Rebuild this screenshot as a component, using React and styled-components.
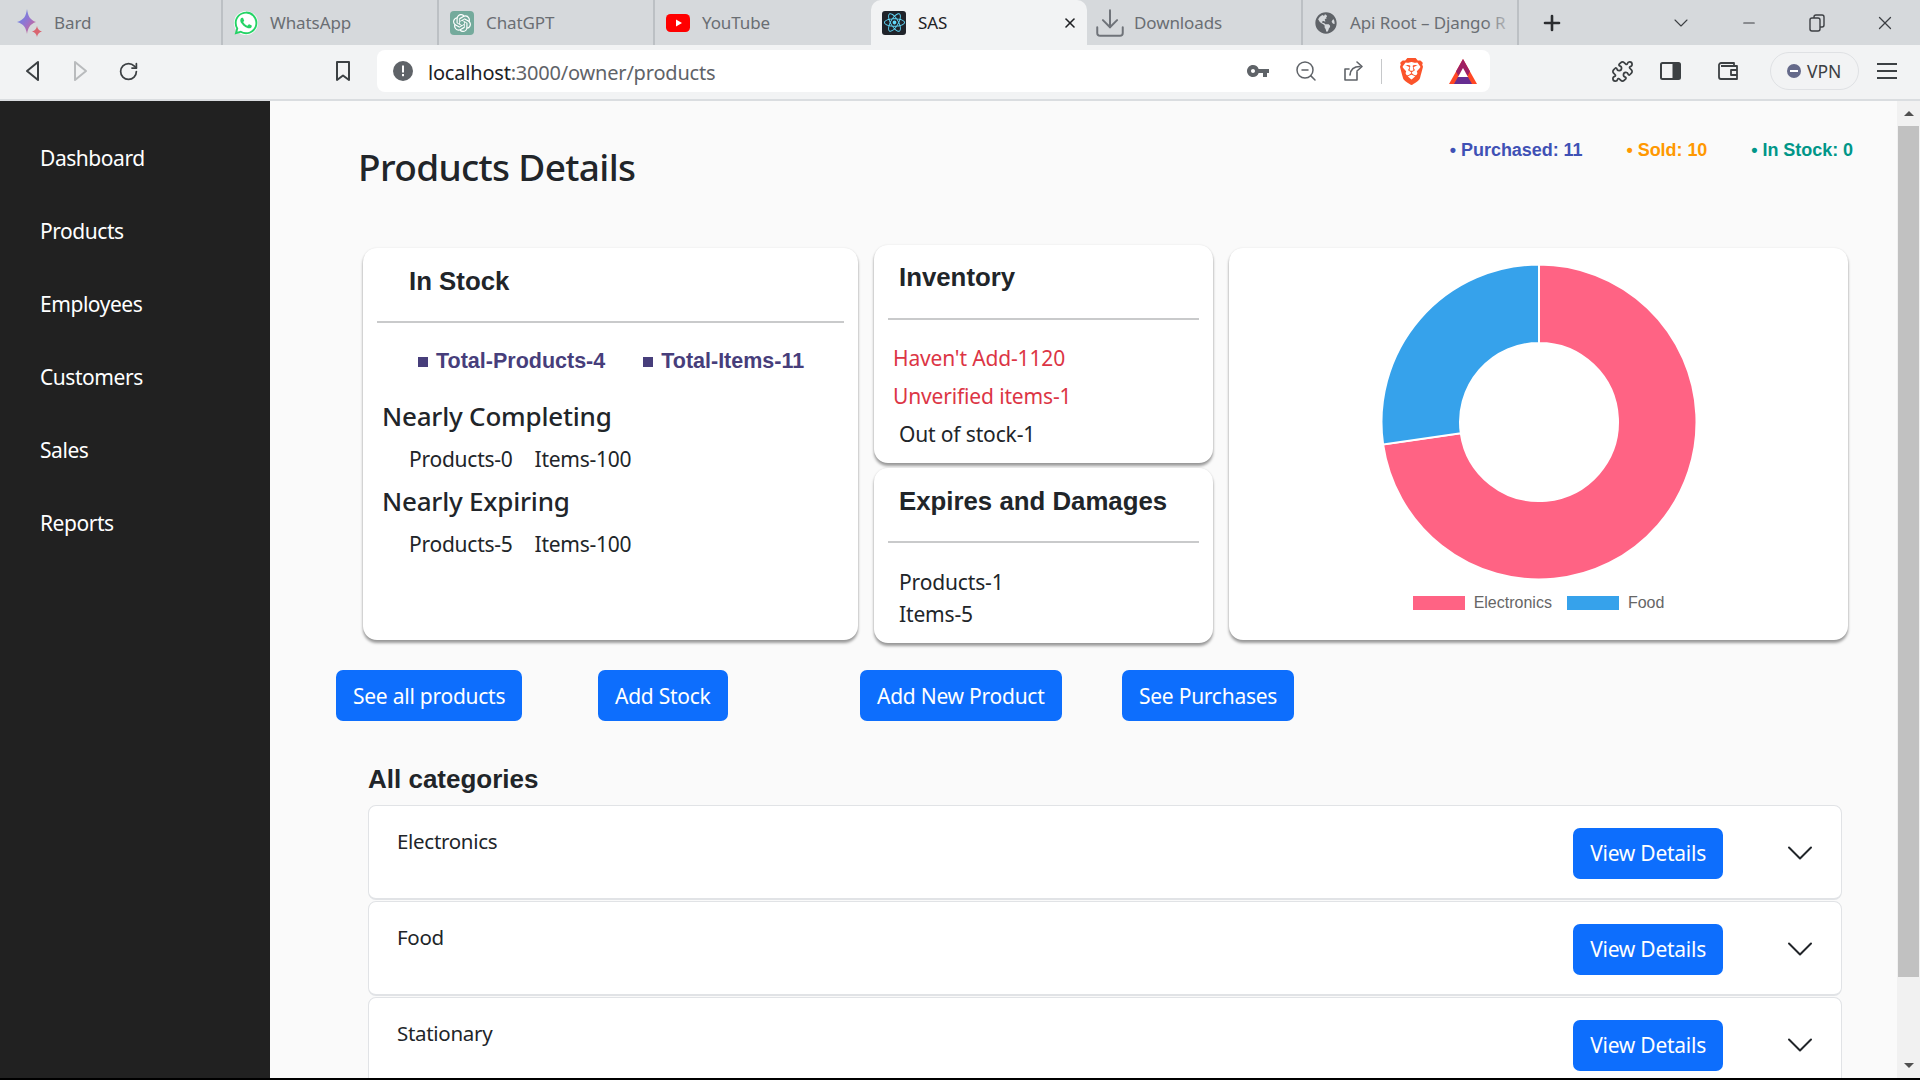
import React from "react";
import styled, { createGlobalStyle } from "styled-components";
import { RotateCw, ZoomOut, Puzzle, Download, X, Plus, ChevronDown, Minus } from "lucide-react";
import { FaReact, FaGlobeAmericas } from "react-icons/fa";
import { IoLogoWhatsapp } from "react-icons/io5";
import { SiOpenai, SiBrave } from "react-icons/si";
import { MdVpnKey } from "react-icons/md";

const uiFont = `"Noto Sans", "Open Sans", sans-serif`;
const boldFont = `"Liberation Sans", Arial, sans-serif`;

const GlobalStyle = createGlobalStyle`
  html, body { margin: 0; padding: 0; height: 1080px; overflow: hidden; }
  body { font-family: ${uiFont}; color: #212529; background: #fafafa; }
  * { box-sizing: border-box; }
`;

const Page = styled.div`
  display: flex;
  flex-direction: column;
  width: 1920px;
  height: 1080px;
  overflow: hidden;
  border-bottom: 2px solid #000;
`;

const TabStrip = styled.div`
  display: flex;
  align-items: stretch;
  flex: 0 0 45px;
  padding-left: 7px;
  background: #d6d9dc;
`;

const Tab = styled.div`
  position: relative;
  display: flex;
  align-items: center;
  gap: 12px;
  width: 216px;
  padding: 0 6px 0 11px;
  overflow: hidden;
  white-space: nowrap;
  font-size: 17px;
  letter-spacing: -0.1px;
  color: ${(p) => (p.$active ? "#202124" : "#6a6e73")};
  background: ${(p) => (p.$active ? "#f2f3f4" : "transparent")};
  border-radius: ${(p) => (p.$active ? "10px 10px 0 0" : "0")};
  border-right: ${(p) => (p.$sep ? "2px solid #bcc0c4" : "0")};
  background-clip: padding-box;
`;

const TabClose = styled.span`
  display: flex;
  margin-left: auto;
  margin-right: 3px;
`;

const TabFade = styled.span`
  position: absolute;
  top: 0;
  right: 0;
  width: 32px;
  height: 100%;
  background: linear-gradient(90deg, rgba(214, 217, 220, 0), #d6d9dc);
`;

const TabIcon = styled.span`
  display: flex;
  align-items: center;
  justify-content: center;
  flex: 0 0 24px;
  width: 24px;
  height: 24px;
  color: ${(p) => p.$color || "inherit"};
  background: ${(p) => p.$bg || "transparent"};
  border-radius: ${(p) => p.$radius || "0"};
  svg { flex: none; }
`;

const NewTab = styled.span`
  display: flex;
  align-items: center;
  margin-left: 21px;
  color: #2b2d30;
`;

const WindowControls = styled.div`
  display: flex;
  margin-left: auto;
  padding-right: 1px;
`;

const WindowButton = styled.span`
  display: flex;
  align-items: center;
  justify-content: center;
  width: 68px;
  color: #3c3f43;
`;

const Toolbar = styled.div`
  display: flex;
  align-items: center;
  flex: 0 0 56px;
  padding: 0 0 2px 9px;
  background: #f2f3f4;
  border-bottom: 2px solid #dadde0;
`;

const IconButton = styled.span`
  display: flex;
  align-items: center;
  justify-content: center;
  flex: 0 0 48px;
  width: 48px;
  height: 40px;
  margin-left: ${(p) => p.$ml || 0}px;
  color: ${(p) => p.$color || "#3c4043"};
`;

const UrlBox = styled.div`
  display: flex;
  align-items: center;
  width: 1113px;
  height: 42px;
  margin-left: 10px;
  padding-left: 16px;
  background: #fff;
  border-radius: 8px;
`;

const UrlText = styled.span`
  margin: 2px 0 0 15px;
  font-size: 20px;
  letter-spacing: -0.2px;
  color: #5f6368;
  em { font-style: normal; color: #202124; }
`;

const UrlActions = styled.div`
  display: flex;
  align-items: center;
  margin-left: auto;
  padding-right: 3px;
`;

const UrlDivider = styled.span`
  width: 1px;
  height: 25px;
  margin: 0 5px 0 3px;
  background: #c6c8ca;
`;

const VpnPill = styled.div`
  display: flex;
  align-items: center;
  gap: 6px;
  width: 89px;
  height: 38px;
  margin-left: 18px;
  padding-left: 16px;
  font-size: 17.5px;
  color: #3c4043;
  border: 1px solid #dfe1e4;
  border-radius: 19px;
`;

const Body = styled.div`
  display: flex;
  flex: 1;
  min-height: 0;
`;

const Sidebar = styled.nav`
  display: flex;
  flex-direction: column;
  flex: 0 0 270px;
  padding-top: 20px;
  background: #212121;
`;

const SideLink = styled.a`
  display: flex;
  align-items: center;
  height: 73px;
  padding-left: 40px;
  font-size: 21px;
  letter-spacing: -0.45px;
  color: #fff;
`;

const Main = styled.main`
  flex: 1;
  min-width: 0;
  overflow: hidden;
  background: #fafafa;
`;

const Header = styled.header`
  display: flex;
  justify-content: space-between;
  align-items: flex-start;
  height: 144px;
  padding: 37px 44px 0 88px;
`;

const Title = styled.h1`
  margin: 0;
  font-size: 37px;
  line-height: 58px;
  font-weight: 500;
  letter-spacing: -0.65px;
  color: #212529;
`;

const Stats = styled.div`
  display: flex;
  gap: 44px;
  padding-top: 2px;
  font-family: ${boldFont};
  font-weight: 700;
  font-size: 18px;
  line-height: 21px;
  letter-spacing: -0.05px;
`;

const Stat = styled.span`
  color: ${(p) => p.$color};
`;

const Overview = styled.section`
  display: grid;
  grid-template-columns: 495px 339px 619px;
  gap: 16px;
  margin-left: 93px;
`;

const Card = styled.div`
  background: #fff;
  border-radius: 14px;
  box-shadow: 0 3px 3px rgba(0, 0, 0, 0.38), 0 0 2px rgba(0, 0, 0, 0.1);
`;

const StockCard = styled(Card)`
  height: 392px;
  margin-top: 3px;
  padding: 15px 14px 0;
`;

const InventoryColumn = styled.div`
  display: flex;
  flex-direction: column;
  gap: 5px;
`;

const SmallCard = styled(Card)`
  height: ${(p) => p.$height}px;
  padding: ${(p) => p.$pad}px 14px 0;
`;

const CardTitle = styled.h3`
  display: flex;
  align-items: center;
  height: 37px;
  margin: 0;
  padding-left: ${(p) => p.$indent}px;
  font-family: ${boldFont};
  font-weight: 700;
  font-size: 25.8px;
  color: #212529;
`;

const Rule = styled.hr`
  height: 1.5px;
  margin: ${(p) => p.$top}px 0 0;
  border: 0;
  background: #c9cacb;
`;

const Totals = styled.ul`
  display: flex;
  gap: 38px;
  margin: 23px 0 0;
  padding: 0 0 0 41px;
  list-style: none;
  font-family: ${boldFont};
  font-weight: 700;
  font-size: 21.5px;
  line-height: 30px;
  color: #473e7b;
`;

const Total = styled.li`
  display: flex;
  align-items: center;
  gap: 8px;
  &::before {
    content: "";
    width: 10px;
    height: 10px;
    margin-top: 3px;
    background: #473e7b;
  }
`;

const SubTitle = styled.h4`
  margin: ${(p) => p.$top}px 0 0 5px;
  font-size: 26px;
  line-height: 38px;
  font-weight: 500;
  letter-spacing: -0.2px;
  color: #212529;
`;

const Counts = styled.div`
  display: flex;
  gap: 22px;
  margin: 9px 0 0 32px;
  font-size: 21px;
  line-height: 30px;
  letter-spacing: -0.25px;
`;

const Line = styled.p`
  margin: ${(p) => p.$top || 0}px 0 0;
  padding-left: ${(p) => p.$indent || 10}px;
  font-size: 21px;
  line-height: 30px;
  letter-spacing: -0.15px;
  color: ${(p) => p.$color || "#212529"};
`;

const ChartCard = styled(Card)`
  display: flex;
  flex-direction: column;
  align-items: center;
  height: 392px;
  margin-top: 3px;
  padding-top: 14px;
`;

const Legend = styled.div`
  display: flex;
  align-items: center;
  height: 18px;
  margin-top: 12px;
  font-family: ${boldFont};
  font-size: 16px;
  color: #666;
`;

const LegendSwatch = styled.span`
  width: 52px;
  height: 14px;
  margin: 0 9px 0 ${(p) => p.$ml || 0}px;
  background: ${(p) => p.$color};
`;

const Actions = styled.div`
  display: grid;
  grid-template-columns: repeat(4, 262px);
  justify-items: start;
  margin: 27px 0 0 66px;
`;

const Button = styled.button`
  height: 51px;
  padding: 0 17px;
  font-family: ${uiFont};
  font-size: 21px;
  letter-spacing: -0.25px;
  color: #fff;
  white-space: nowrap;
  background: #0d6efd;
  border: 0;
  border-radius: 7px;
`;

const SectionTitle = styled.h2`
  margin: 43px 0 11px 98px;
  font-family: ${boldFont};
  font-weight: 700;
  font-size: 26px;
  line-height: 30px;
  color: #212529;
`;

const Rows = styled.div`
  display: flex;
  flex-direction: column;
  gap: 1px;
  width: 1474px;
  margin-left: 98px;
`;

const Row = styled.div`
  display: flex;
  align-items: center;
  flex: 0 0 95px;
  height: 95px;
  padding: 2px 19px 0 28px;
  background: #fff;
  border: 1px solid #e1e3e6;
  border-bottom-width: 2px;
  border-radius: 8px;
`;

const RowName = styled.span`
  align-self: flex-start;
  margin-top: 18px;
  font-size: 20.5px;
  line-height: 30px;
  letter-spacing: -0.3px;
`;

const RowButton = styled(Button)`
  margin-left: auto;
`;

const Chevron = styled.span`
  display: flex;
  margin-left: 55px;
  color: #212529;
`;

const Scrollbar = styled.div`
  display: flex;
  flex-direction: column;
  align-items: center;
  flex: 0 0 23px;
  background: #f1f1f1;
`;

const ArrowCell = styled.span`
  display: flex;
  align-items: center;
  justify-content: center;
  flex: 0 0 25px;
  margin-top: ${(p) => (p.$down ? "auto" : "0")};
  &::before {
    content: "";
    border-left: 5px solid transparent;
    border-right: 5px solid transparent;
    border-${(p) => (p.$down ? "top" : "bottom")}: 5px solid #505050;
  }
`;

const ScrollThumb = styled.span`
  width: 21px;
  height: 851px;
  background: #c1c1c1;
`;

const polar = (r, turn) => {
  const a = turn * 2 * Math.PI;
  return [160 + r * Math.sin(a), 160 - r * Math.cos(a)];
};

const slicePath = (from, to) => {
  const large = to - from > 0.5 ? 1 : 0;
  const [ax, ay] = polar(157.5, from);
  const [bx, by] = polar(157.5, to);
  const [cx, cy] = polar(79, to);
  const [dx, dy] = polar(79, from);
  return `M${ax} ${ay}A157.5 157.5 0 ${large} 1 ${bx} ${by}L${cx} ${cy}A79 79 0 ${large} 0 ${dx} ${dy}Z`;
};

const Donut = () => (
  <svg width="320" height="320" viewBox="0 0 320 320">
    <path d={slicePath(0, 8 / 11)} fill="#ff6384" stroke="#fff" strokeWidth="2" />
    <path d={slicePath(8 / 11, 1)} fill="#36a2eb" stroke="#fff" strokeWidth="2" />
  </svg>
);

const BardIcon = () => (
  <svg width="26" height="30" viewBox="0 0 26 30">
    <defs>
      <linearGradient id="bardGrad" x1="0" y1="0" x2="1" y2="1">
        <stop offset="0" stopColor="#4f8df5" />
        <stop offset="0.55" stopColor="#9b72cb" />
        <stop offset="1" stopColor="#e4626f" />
      </linearGradient>
    </defs>
    <path d="M10 1C11 8 13 12 19 14 13 16 11 20 10 26 9 20 7 16 0 14 7 12 9 8 10 1Z" fill="url(#bardGrad)" />
    <path d="M20 18C20.5 21 22 22.5 25 23.5 22 24.5 20.5 26 20 29 19.5 26 18 24.5 15 23.5 18 22.5 19.5 21 20 18Z" fill="#d96570" />
  </svg>
);

const YoutubeIcon = () => (
  <svg width="24" height="24" viewBox="0 0 24 24">
    <rect y="3" width="24" height="18" rx="4.5" fill="#f00" />
    <path d="M10 8.5 16 12 10 15.5Z" fill="#fff" />
  </svg>
);

const NavTriangle = ({ flip }) => (
  <svg width="20" height="24" viewBox="0 0 20 24" fill="none" stroke="currentColor" strokeWidth="2" strokeLinejoin="round">
    <path d={flip ? "M5 3 16 12 5 21Z" : "M15 3 4 12 15 21Z"} />
  </svg>
);

const BookmarkIcon = () => (
  <svg width="18" height="24" viewBox="0 0 18 24" fill="none" stroke="currentColor" strokeWidth="2" strokeLinejoin="round">
    <path d="M3 3H15V21L9 16.5 3 21Z" />
  </svg>
);

const InfoIcon = () => (
  <svg width="20" height="20" viewBox="0 0 20 20">
    <circle cx="10" cy="10" r="10" fill="#5f6368" />
    <rect x="9" y="4.5" width="2" height="7" fill="#fff" />
    <rect x="9" y="13" width="2" height="2.2" fill="#fff" />
  </svg>
);

const ShareIcon = () => (
  <svg width="24" height="24" viewBox="0 0 24 24" fill="none" stroke="currentColor" strokeWidth="1.6" strokeLinejoin="round" strokeLinecap="round">
    <path d="M15 13V21H3V10H7" />
    <path d="M8 16C8.5 10 12 7.5 18 7.5" />
    <path d="M15 3 20 7.5 15 12" />
  </svg>
);

const BatIcon = () => (
  <svg width="28" height="25" viewBox="0 0 28 25">
    <path d="M14 0 28 25H0Z" fill="#ff4724" />
    <path d="M14 0 21 12.5 14 25 7 12.5Z" fill="#9e1f63" />
    <path d="M14 9 19 18H9Z" fill="#fff" />
    <path d="M9 18H19L23 25H5Z" fill="#662d91" />
  </svg>
);

const SidePanelIcon = () => (
  <svg width="22" height="20" viewBox="0 0 22 20">
    <rect x="1" y="2" width="19" height="16" rx="1.5" fill="none" stroke="#3c4043" strokeWidth="2" />
    <rect x="12.5" y="2" width="7.5" height="16" fill="#3c4043" />
  </svg>
);

const WalletIcon = () => (
  <svg width="22" height="22" viewBox="0 0 22 22" fill="none" stroke="#3c4043" strokeWidth="1.8" strokeLinejoin="round">
    <path d="M17 6V3H4A2.5 2.5 0 0 0 2 6V17A2 2 0 0 0 4 19H20V6H4" />
    <path d="M20 10H14V15H20" />
  </svg>
);

const VpnDot = () => (
  <svg width="14" height="14" viewBox="0 0 14 14">
    <circle cx="7" cy="7" r="7" fill="#656a8a" />
    <rect x="3" y="6" width="8" height="2" fill="#fff" />
  </svg>
);

const MenuIcon = () => (
  <svg width="22" height="18" viewBox="0 0 22 18" stroke="#3c4043" strokeWidth="2">
    <path d="M1 2H21M1 9H21M1 16H21" />
  </svg>
);

const categories = ["Electronics", "Food", "Stationary"];

export default function App() {
  return (
    <>
      <GlobalStyle />
      <Page>
        <TabStrip>
          <Tab $sep>
            <TabIcon><BardIcon /></TabIcon>
            Bard
          </Tab>
          <Tab $sep>
            <TabIcon $color="#25d366" $bg="#fff" $radius="50%"><IoLogoWhatsapp size={26} /></TabIcon>
            WhatsApp
          </Tab>
          <Tab $sep>
            <TabIcon $color="#fff" $bg="#74aa9c" $radius="4px"><SiOpenai size={18} /></TabIcon>
            ChatGPT
          </Tab>
          <Tab>
            <TabIcon><YoutubeIcon /></TabIcon>
            YouTube
          </Tab>
          <Tab $active>
            <TabIcon $color="#61dafb" $bg="#20232a" $radius="3px"><FaReact size={21} /></TabIcon>
            SAS
            <TabClose><X size={16} strokeWidth={2.4} /></TabClose>
          </Tab>
          <Tab $sep>
            <TabIcon $color="#6f7379"><Download size={34} strokeWidth={1.4} /></TabIcon>
            Downloads
          </Tab>
          <Tab $sep>
            <TabIcon $color="#5f6368"><FaGlobeAmericas size={22} /></TabIcon>
            Api Root – Django R
            <TabFade />
          </Tab>
          <NewTab><Plus size={24} strokeWidth={2.6} /></NewTab>
          <WindowControls>
            <WindowButton><ChevronDown size={24} strokeWidth={1.1} /></WindowButton>
            <WindowButton><Minus size={18} strokeWidth={1.5} /></WindowButton>
            <WindowButton>
              <svg width="18" height="20" viewBox="0 0 18 20" fill="none" stroke="currentColor" strokeWidth="1.4">
                <rect x="2" y="5" width="10" height="13" rx="2" />
                <path d="M6 5V4A2 2 0 0 1 8 2H14A2 2 0 0 1 16 4V12A2 2 0 0 1 14 14H12" />
              </svg>
            </WindowButton>
            <WindowButton><X size={22} strokeWidth={1.4} /></WindowButton>
          </WindowControls>
        </TabStrip>

        <Toolbar>
          <IconButton><NavTriangle /></IconButton>
          <IconButton $ml={-1} $color="#b9bbbd"><NavTriangle flip /></IconButton>
          <IconButton><RotateCw size={21} strokeWidth={2} /></IconButton>
          <IconButton $ml={167}><BookmarkIcon /></IconButton>
          <UrlBox>
            <InfoIcon />
            <UrlText><em>localhost</em>:3000/owner/products</UrlText>
            <UrlActions>
              <IconButton $color="#5f6368"><MdVpnKey size={24} /></IconButton>
              <IconButton $color="#5f6368"><ZoomOut size={24} strokeWidth={1.5} /></IconButton>
              <IconButton $color="#5f6368"><ShareIcon /></IconButton>
              <UrlDivider />
              <IconButton $color="#fb542b"><SiBrave size={27} /></IconButton>
              <IconButton $ml={4}><BatIcon /></IconButton>
            </UrlActions>
          </UrlBox>
          <IconButton $ml={108}><Puzzle size={23} strokeWidth={1.8} /></IconButton>
          <IconButton $ml={1}><SidePanelIcon /></IconButton>
          <IconButton $ml={9}><WalletIcon /></IconButton>
          <VpnPill><VpnDot />VPN</VpnPill>
          <IconButton $ml={4}><MenuIcon /></IconButton>
        </Toolbar>

        <Body>
          <Sidebar>
            {["Dashboard", "Products", "Employees", "Customers", "Sales", "Reports"].map((item) => (
              <SideLink key={item}>{item}</SideLink>
            ))}
          </Sidebar>

          <Main>
            <Header>
              <Title>Products Details</Title>
              <Stats>
                <Stat $color="#3f51b5">• Purchased: 11</Stat>
                <Stat $color="#ff9800">• Sold: 10</Stat>
                <Stat $color="#009688">• In Stock: 0</Stat>
              </Stats>
            </Header>

            <Overview>
              <StockCard>
                <CardTitle $indent={32}>In Stock</CardTitle>
                <Rule $top={21} />
                <Totals>
                  <Total>Total-Products-4</Total>
                  <Total>Total-Items-11</Total>
                </Totals>
                <SubTitle $top={21}>Nearly Completing</SubTitle>
                <Counts><span>Products-0</span><span>Items-100</span></Counts>
                <SubTitle $top={8}>Nearly Expiring</SubTitle>
                <Counts><span>Products-5</span><span>Items-100</span></Counts>
              </StockCard>

              <InventoryColumn>
                <SmallCard $height={218} $pad={14}>
                  <CardTitle $indent={11}>Inventory</CardTitle>
                  <Rule $top={22} />
                  <Line $top={23} $indent={5} $color="#dc3545">Haven't Add-1120</Line>
                  <Line $top={8} $indent={5} $color="#dc3545">Unverified items-1</Line>
                  <Line $top={8} $indent={11}>Out of stock-1</Line>
                </SmallCard>
                <SmallCard $height={175} $pad={15}>
                  <CardTitle $indent={11}>Expires and Damages</CardTitle>
                  <Rule $top={21} />
                  <Line $top={24} $indent={11}>Products-1</Line>
                  <Line $top={2} $indent={11}>Items-5</Line>
                </SmallCard>
              </InventoryColumn>

              <ChartCard>
                <Donut />
                <Legend>
                  <LegendSwatch $color="#ff6384" />
                  Electronics
                  <LegendSwatch $color="#36a2eb" $ml={15} />
                  Food
                </Legend>
              </ChartCard>
            </Overview>

            <Actions>
              <div><Button>See all products</Button></div>
              <div><Button>Add Stock</Button></div>
              <div><Button>Add New Product</Button></div>
              <div><Button>See Purchases</Button></div>
            </Actions>

            <SectionTitle>All categories</SectionTitle>
            <Rows>
              {categories.map((name) => (
                <Row key={name}>
                  <RowName>{name}</RowName>
                  <RowButton>View Details</RowButton>
                  <Chevron><ChevronDown size={44} strokeWidth={1.1} /></Chevron>
                </Row>
              ))}
            </Rows>
          </Main>

          <Scrollbar>
            <ArrowCell />
            <ScrollThumb />
            <ArrowCell $down />
          </Scrollbar>
        </Body>
      </Page>
    </>
  );
}
